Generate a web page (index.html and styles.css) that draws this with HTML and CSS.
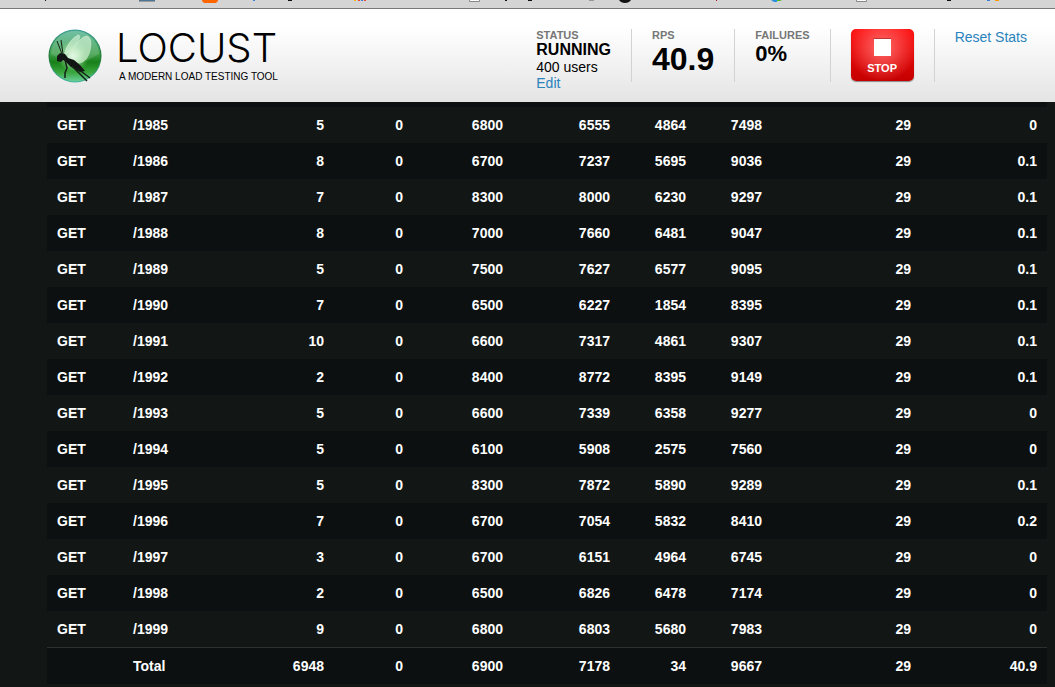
FILE: index.html
```
<!DOCTYPE html>
<html lang="en">
<head>
<meta charset="utf-8">
<title>Locust</title>
<link rel="stylesheet" href="styles.css">
</head>
<body>
<div class="strip" aria-hidden="true">
<svg class="marks" width="1055" height="4" viewBox="0 0 1055 4">
<path fill="#111" d="M45 0h1v1h-1zM288 0h4v1h-4zM505 0h2v1h-2zM528 0h4v1h-4zM947 0h4v1h-4z"/>
<path fill="#4d7596" d="M139 0h16v1h-16z"/><path fill="#999" d="M139 1h16v1h-16zM589 0h5v1h-5z"/>
<path fill="#f60" d="M202 0h16v1l-2 2h-12l-2-2z"/>
<path fill="#3b7fd0" d="M253 0h2v1h-2zM361 0h2v1h-2zM987 0h3v1h-3z"/>
<path fill="#fb0" d="M354 0h2v1h-2z"/><path fill="#f90" d="M995 0h4v1h-4z"/><path fill="#e43" d="M358 0h2v1h-2zM364 0h2v1h-2z"/>
<path fill="#fff" stroke="#888" d="M469.500-1h10v2.500h-10zM856.500-1h10v2.500h-10z"/>
<path fill="#111" d="M619 0h12q-2 3-6 3t-6-3z"/>
<path fill="#b01020" d="M716 0h1v1h-1z"/>
<path fill="#2b8fe0" d="M771 0h6v2h-3z"/><path fill="#4b2" d="M777 0h5l-2 1h-3z"/>
</svg>
</div>
<header class="top">
<div class="brand">
<svg class="logo" width="54" height="54" viewBox="0 0 54 54" role="img" aria-label="Locust logo">
<defs>
<linearGradient id="rim" x1="0" y1="0" x2="0" y2="1"><stop offset="0" stop-color="#3c9c98"/><stop offset=".5" stop-color="#1c7430"/><stop offset="1" stop-color="#45b5a0"/></linearGradient>
<linearGradient id="ball" x1="0" y1="0" x2="0" y2="1"><stop offset="0" stop-color="#58b596"/><stop offset=".45" stop-color="#3f9f4c"/><stop offset=".62" stop-color="#188018"/><stop offset=".82" stop-color="#38a53c"/><stop offset="1" stop-color="#68d09a"/></linearGradient>
<radialGradient id="glow"><stop offset="0" stop-color="#fff"/><stop offset=".4" stop-color="#c8f0c8" stop-opacity=".8"/><stop offset="1" stop-color="#80d080" stop-opacity="0"/></radialGradient>
</defs>
<circle cx="27" cy="27" r="26.500" fill="url(#rim)"/>
<circle cx="27" cy="27" r="25.500" fill="url(#ball)"/>
<path fill="#fff" opacity=".15" d="M3 25C4 11 14 2 27 2s23 10 24 23c-10 6-16 8-24 8S10 29 3 25z"/>
<circle cx="25" cy="27" r="16" fill="url(#glow)"/>
<path fill="#d4f3d6" fill-opacity=".65" stroke="#dcf5dc" stroke-width=".5" d="M17 24C18 16 27 6 31 6c3 3-4 13-14 20z"/>
<path fill="#d4f3d6" fill-opacity=".65" stroke="#dcf5dc" stroke-width=".5" d="M20 28C25 19 33 7 39 7c6 2 4 14 1 20-4 8-12 10-20 1z"/>
<path fill="#111614" d="M9 27l3-3 5 1 3 4 6 2 6 5 5 6-5 1-9-5-6-6-2-1-2 2-4-1z"/>
<g fill="none" stroke="#152018" stroke-width="1"><path d="M14 25L9 12M15 25l-2-14"/><path stroke-width="1.500" d="M17 31l2 8-2 5v5M24 37l15 15M30 40l12 9"/></g>
</svg>
<div class="names"><div class="word">LOCUST</div><div class="tag">A MODERN LOAD TESTING TOOL</div></div>
</div>
<div class="boxes">
<section class="box status"><h2>STATUS</h2><strong>RUNNING</strong><span>400 users</span><a href="#edit">Edit</a></section>
<section class="box rps"><h2>RPS</h2><strong>40.9</strong></section>
<section class="box fail"><h2>FAILURES</h2><strong>0%</strong></section>
<div class="box stopbox"><button class="stop" type="button"><i class="square"></i>STOP</button></div>
<div class="box reset"><a href="#reset">Reset Stats</a></div>
</div>
</header>
<main class="content">
<table class="stats">
<colgroup><col class="c-type"><col class="c-name"><col class="c-req"><col class="c-fail"><col class="c-med"><col class="c-avg"><col class="c-min"><col class="c-max"><col class="c-size"><col class="c-rps"></colgroup>
<tbody>
<tr><td>GET</td><td>/1985</td><td>5</td><td>0</td><td>6800</td><td>6555</td><td>4864</td><td>7498</td><td>29</td><td>0</td></tr>
<tr><td>GET</td><td>/1986</td><td>8</td><td>0</td><td>6700</td><td>7237</td><td>5695</td><td>9036</td><td>29</td><td>0.1</td></tr>
<tr><td>GET</td><td>/1987</td><td>7</td><td>0</td><td>8300</td><td>8000</td><td>6230</td><td>9297</td><td>29</td><td>0.1</td></tr>
<tr><td>GET</td><td>/1988</td><td>8</td><td>0</td><td>7000</td><td>7660</td><td>6481</td><td>9047</td><td>29</td><td>0.1</td></tr>
<tr><td>GET</td><td>/1989</td><td>5</td><td>0</td><td>7500</td><td>7627</td><td>6577</td><td>9095</td><td>29</td><td>0.1</td></tr>
<tr><td>GET</td><td>/1990</td><td>7</td><td>0</td><td>6500</td><td>6227</td><td>1854</td><td>8395</td><td>29</td><td>0.1</td></tr>
<tr><td>GET</td><td>/1991</td><td>10</td><td>0</td><td>6600</td><td>7317</td><td>4861</td><td>9307</td><td>29</td><td>0.1</td></tr>
<tr><td>GET</td><td>/1992</td><td>2</td><td>0</td><td>8400</td><td>8772</td><td>8395</td><td>9149</td><td>29</td><td>0.1</td></tr>
<tr><td>GET</td><td>/1993</td><td>5</td><td>0</td><td>6600</td><td>7339</td><td>6358</td><td>9277</td><td>29</td><td>0</td></tr>
<tr><td>GET</td><td>/1994</td><td>5</td><td>0</td><td>6100</td><td>5908</td><td>2575</td><td>7560</td><td>29</td><td>0</td></tr>
<tr><td>GET</td><td>/1995</td><td>5</td><td>0</td><td>8300</td><td>7872</td><td>5890</td><td>9289</td><td>29</td><td>0.1</td></tr>
<tr><td>GET</td><td>/1996</td><td>7</td><td>0</td><td>6700</td><td>7054</td><td>5832</td><td>8410</td><td>29</td><td>0.2</td></tr>
<tr><td>GET</td><td>/1997</td><td>3</td><td>0</td><td>6700</td><td>6151</td><td>4964</td><td>6745</td><td>29</td><td>0</td></tr>
<tr><td>GET</td><td>/1998</td><td>2</td><td>0</td><td>6500</td><td>6826</td><td>6478</td><td>7174</td><td>29</td><td>0</td></tr>
<tr><td>GET</td><td>/1999</td><td>9</td><td>0</td><td>6800</td><td>6803</td><td>5680</td><td>7983</td><td>29</td><td>0</td></tr>
</tbody>
<tfoot>
<tr><td></td><td>Total</td><td>6948</td><td>0</td><td>6900</td><td>7178</td><td>34</td><td>9667</td><td>29</td><td>40.9</td></tr>
</tfoot>
</table>
</main>
</body>
</html>
```
FILE: styles.css
```
* { box-sizing: border-box; }
body {
  margin: 0;
  background: #121716;
  color: #fff;
  font-family: "Liberation Sans", Arial, sans-serif;
  font-size: 14px;
}
a { color: #2a83bd; text-decoration: none; }
.strip { height: 9px; background: #d4d4d4; border-bottom: 1px solid #777; overflow: hidden; }
.marks { display: block; }
.top {
  display: flex;
  justify-content: space-between;
  height: 93px;
  padding: 20px 20px 0 48px;
  background: linear-gradient(#fff 20%, #e4e4e4);
  color: #000;
}
.brand { display: flex; gap: 14px; }
.word { font-family: Inter, sans-serif; font-weight: 300; font-size: 40px; line-height: 38px; }
.tag { font-size: 10px; line-height: 12px; padding: 4px 0 0 3px; white-space: nowrap; }
.boxes { display: flex; height: 53px; }
.box { display: flex; flex-direction: column; align-items: flex-start; padding: 0 20px; border-left: 1px solid #d2d2d2; white-space: nowrap; }
.box:first-child { border-left: 0; }
.box:last-child { padding-right: 8px; }
.box h2 { margin: 0; font-size: 11px; line-height: 13px; color: #777; }
.status strong { font-size: 16px; line-height: 16px; }
.status span { line-height: 18px; }
.status a { line-height: 14px; }
.rps strong { font-size: 32px; line-height: 34px; }
.fail strong { font-size: 22px; line-height: 24px; }
.reset a { line-height: 16px; }
.stop {
  display: flex;
  flex-direction: column;
  align-items: center;
  gap: 4px;
  width: 63px;
  height: 52px;
  padding: 9px 0 0;
  border: 0;
  border-radius: 5px;
  background: radial-gradient(circle at 50% 35%, #ff6a6a, rgba(255, 60, 60, 0) 75%), linear-gradient(#ff1010, #c40000);
  box-shadow: 0 1px 1px #888;
  color: #fff;
  font: bold 11px/16px "Liberation Sans", Arial, sans-serif;
}
.square { width: 17px; height: 18px; flex: none; background: #fff; border-top: 1px solid #b33; }
.content { padding: 0 8px 3px 47px; }
.content::before { content: ""; display: block; height: 5px; background: #0c1010; }
.stats { width: 100%; table-layout: fixed; border-collapse: collapse; font-weight: bold; }
.stats td { height: 36px; padding: 0 10px; text-align: right; }
.stats td:nth-child(-n+2) { text-align: left; }
.stats tbody tr:nth-child(even), .stats tfoot tr { background: #0c1010; }
.stats tfoot td { height: 37px; border-top: 1px solid #2b3130; }
.c-type { width: 7.6%; }
.c-name { width: 13.1%; }
.c-req { width: 8%; }
.c-fail { width: 7.9%; }
.c-med { width: 10%; }
.c-avg { width: 10.7%; }
.c-min { width: 7.6%; }
.c-max { width: 7.6%; }
.c-size { width: 14.9%; }
.c-rps { width: 12.6%; }
```
